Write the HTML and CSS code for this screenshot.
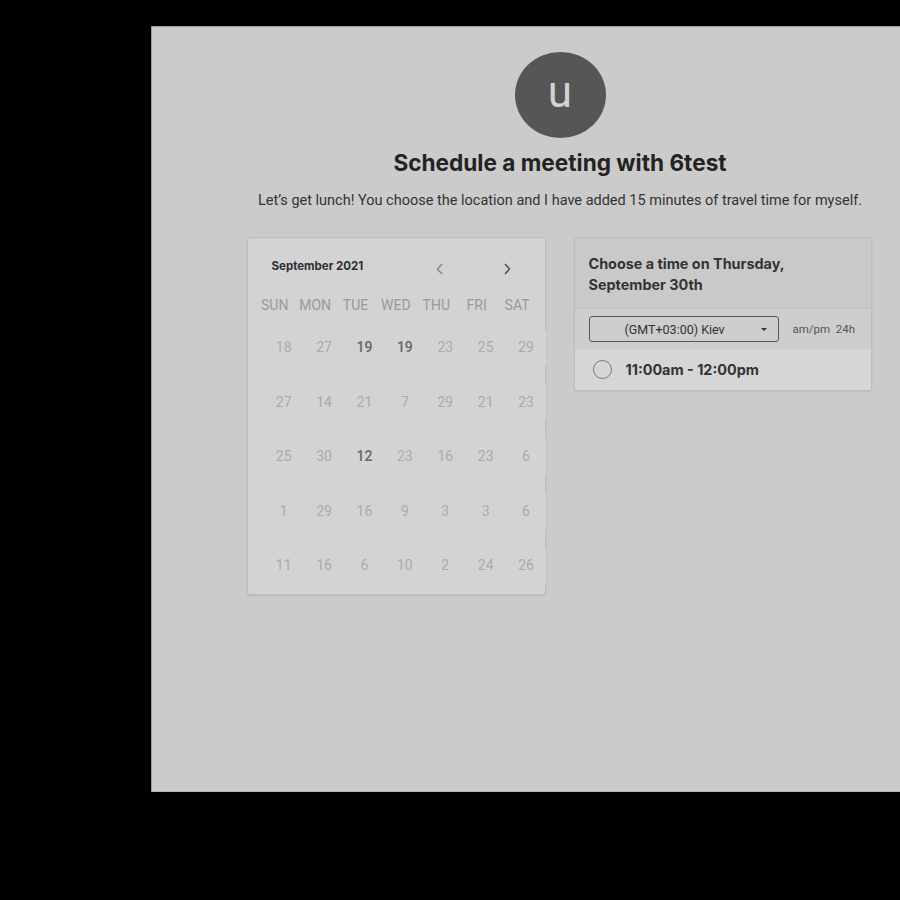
FILE: index.html
```html
<!DOCTYPE html>
<html>
<head>
<meta charset="utf-8">
<link rel="stylesheet" href="styles.css">
</head>
<body>
<div class="panel">
  <div class="avatar">u</div>
  <h1 class="title">Schedule a meeting with 6test</h1>
  <p class="desc">Let’s get lunch! You choose the location and I have added 15 minutes of travel time for myself.</p>
  <div class="cards">
    <div class="calendar">
      <div class="cal-head">
        <span class="month">September 2021</span>
        <span class="arrow prev"><svg width="10" height="12" viewBox="0 0 10 12"><path d="M7 1 L2.5 6 L7 11" fill="none" stroke="#8a8a8a" stroke-width="1.6"/></svg></span>
        <span class="arrow next"><svg width="10" height="12" viewBox="0 0 10 12"><path d="M3 1 L7.5 6 L3 11" fill="none" stroke="#555" stroke-width="1.6"/></svg></span>
      </div>
      <div class="dow">
        <span>SUN</span><span>MON</span><span>TUE</span><span>WED</span><span>THU</span><span>FRI</span><span>SAT</span>
      </div>
      <div class="dates">
        <span>18</span><span>27</span><span class="on">19</span><span class="on">19</span><span>23</span><span>25</span><span>29</span>
        <span>27</span><span>14</span><span>21</span><span>7</span><span>29</span><span>21</span><span>23</span>
        <span>25</span><span>30</span><span class="on">12</span><span>23</span><span>16</span><span>23</span><span>6</span>
        <span>1</span><span>29</span><span>16</span><span>9</span><span>3</span><span>3</span><span>6</span>
        <span>11</span><span>16</span><span>6</span><span>10</span><span>2</span><span>24</span><span>26</span>
      </div>
    </div>
    <div class="times">
      <div class="times-head">Choose a time on Thursday,<br>September 30th</div>
      <div class="tz-row">
        <div class="tz-select"><span>(GMT+03:00) Kiev</span><span class="caret"></span></div>
        <div class="fmt">am/pm&nbsp;&nbsp;24h</div>
      </div>
      <div class="slot">
        <span class="radio"></span>
        <span class="slot-text">11:00am - 12:00pm</span>
      </div>
    </div>
  </div>
</div>
</body>
</html>
```

FILE: styles.css
```css
html, body {
  margin: 0;
  padding: 0;
  background: #000;
  overflow: hidden;
  height: 900px;
}
.panel {
  margin: 26px 0 0 151px;
  width: 818px;
  height: 766px;
  box-sizing: border-box;
  background: #cbcbcb;
  box-shadow: inset 1px 1px 0 #9a9a9a, inset 0 -1px 0 #b5b5b5;
  padding-top: 26px;
  display: flex;
  flex-direction: column;
  align-items: center;
  font-family: Roboto, "Liberation Sans", sans-serif;
}
.avatar {
  width: 91px;
  height: 86px;
  border-radius: 50%;
  background: #565656;
  color: #d2d2d2;
  font-family: Roboto, sans-serif;
  font-size: 44px;
  line-height: 80px;
  text-align: center;
}
.title {
  margin: 12px 0 0;
  font-family: Inter, "Noto Sans", sans-serif;
  font-weight: 700;
  font-size: 22.6px;
  line-height: 26px;
  letter-spacing: 0;
  color: #232323;
}
.desc {
  margin: 15px 0 0;
  font-size: 14.5px;
  line-height: 20px;
  color: #333;
}
.cards {
  margin-top: 26px;
  margin-right: 2px;
  display: flex;
  gap: 28px;
  align-items: flex-start;
}
.calendar {
  width: 299px;
  height: 358px;
  box-sizing: border-box;
  background: #d3d3d3;
  border: 1px solid #bdbdbd;
  border-radius: 3px;
  box-shadow: 0 1px 2px rgba(0,0,0,0.08);
  padding: 16px 0 0 7px;
}
.cal-head {
  display: flex;
  align-items: center;
  height: 30px;
}
.month {
  margin-left: 17px;
  font-family: Inter, sans-serif;
  font-weight: 700;
  font-size: 11.5px;
  color: #2f2f2f;
  margin-top: -6px;
  width: 158px;
}
.arrow {
  width: 20px;
  display: flex;
  justify-content: center;
}
.prev { margin-left: 0; }
.next { margin-left: 47px; }
.dow {
  margin-top: 13px;
  display: grid;
  grid-template-columns: repeat(7, 40.4px);
  font-size: 14px;
  line-height: 16px;
  color: #9a9a9a;
  text-align: center;
}
.dates {
  margin: 17px 0 0 9px;
  width: 283px;
  display: grid;
  grid-template-columns: repeat(7, 40.4px);
  grid-auto-rows: 35px;
  row-gap: 19.6px;
  font-size: 14px;
  color: #ababab;
  text-align: center;
  position: relative;
}
.dates span {
  background: #d3d3d3;
  line-height: 35px;
}
.dates .on {
  color: #666;
  font-weight: 500;
}
.times {
  width: 298px;
  box-sizing: border-box;
  border: 1px solid #bdbdbd;
  border-radius: 3px;
  background: #d4d4d4;
  box-shadow: 0 1px 2px rgba(0,0,0,0.08);
  overflow: hidden;
}
.times-head {
  background: #c9c9c9;
  padding: 15px 14px 13px;
  font-family: Inter, sans-serif;
  font-weight: 700;
  font-size: 14.4px;
  line-height: 21px;
  color: #333;
  border-bottom: 1px solid #c0c0c0;
}
.tz-row {
  background: #cdcdcd;
  height: 40px;
  display: flex;
  align-items: center;
  padding-left: 14px;
}
.tz-select {
  width: 190px;
  height: 26px;
  box-sizing: border-box;
  border: 1px solid #575757;
  border-radius: 3px;
  display: flex;
  align-items: center;
  font-size: 12.5px;
  color: #333;
  padding-left: 35px;
}
.caret {
  margin-left: 36px;
  width: 0;
  height: 0;
  border-left: 3.5px solid transparent;
  border-right: 3.5px solid transparent;
  border-top: 3.5px solid #333;
}
.fmt {
  margin-left: 14px;
  font-size: 11.5px;
  color: #555;
}
.slot {
  background: #d6d6d6;
  height: 41px;
  display: flex;
  align-items: center;
  padding-left: 18px;
}
.radio {
  width: 17px;
  height: 17px;
  border: 1.5px solid #7a7a7a;
  border-radius: 50%;
}
.slot-text {
  margin-left: 14px;
  font-family: Inter, sans-serif;
  font-weight: 700;
  font-size: 14.4px;
  color: #333;
}
```
